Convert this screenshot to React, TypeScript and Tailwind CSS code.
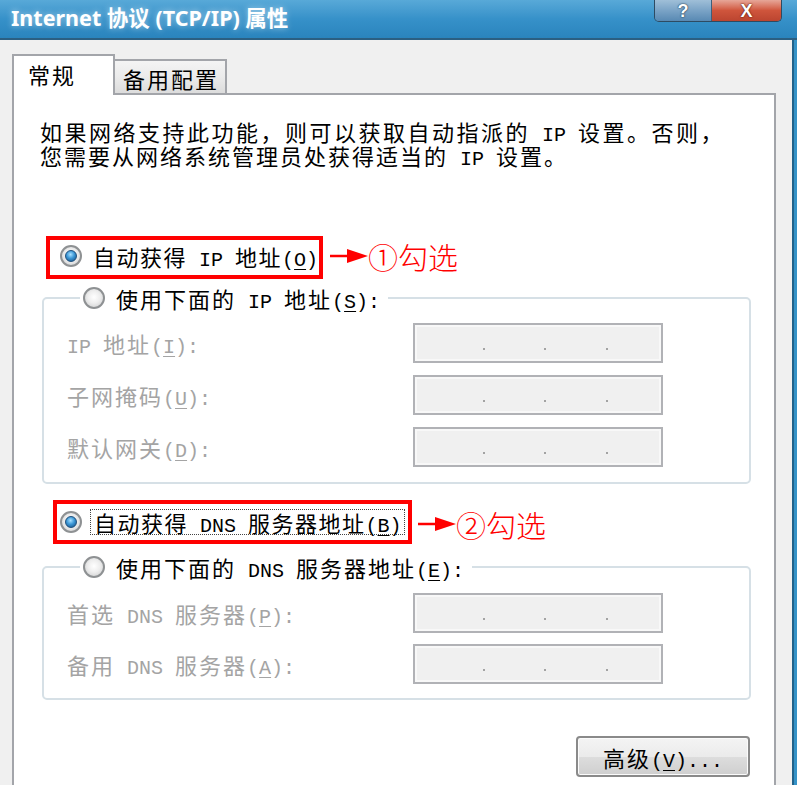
import React from "react";

function L({ children }: { children: React.ReactNode }) {
  return (
    <span className="font-['Liberation_Mono',monospace] text-[20px] leading-[0] tracking-normal whitespace-pre">
      {children}
    </span>
  );
}

function U({ children }: { children: React.ReactNode }) {
  return <span className="underline underline-offset-[3px] decoration-1">{children}</span>;
}

function Radio({ checked }: { checked?: boolean }) {
  return (
    <div className="w-[22px] h-[22px] shrink-0 rounded-full border-2 border-[#8e9193] bg-[radial-gradient(circle_at_50%_45%,#ffffff_0%,#eeeeee_45%,#c8c9ca_100%)] flex items-center justify-center">
      {checked && (
        <div className="w-[12px] h-[12px] rounded-full border border-[#1d4f7c] bg-[radial-gradient(circle_at_45%_35%,#a8e0ff_0%,#3b97d6_45%,#15497c_100%)]" />
      )}
    </div>
  );
}

function Dot({ className }: { className?: string }) {
  return <div className={"w-[2px] h-[2px] bg-[#a3a3a3] " + (className ?? "")} />;
}

function IpBox() {
  return (
    <div className="w-[250px] h-[40px] shrink-0 border-2 border-[#b1b2b6] bg-[#f0f0f0] shadow-[inset_0_0_0_2px_#f8f8f8] flex items-end pb-[11px] pl-[68px]">
      <Dot />
      <Dot className="ml-[59px]" />
      <Dot className="ml-[60px]" />
    </div>
  );
}

function FieldRow({ label }: { label: React.ReactNode }) {
  return (
    <div className="flex items-center h-[40px]">
      <div className="w-[346px] h-[24px] leading-[24px] text-[#a4a4a4] whitespace-nowrap">{label}</div>
      <IpBox />
    </div>
  );
}

function Annotation({ num }: { num: string }) {
  return (
    <div className="flex items-center h-[36px] text-[#ff0000] font-['Noto_Sans_CJK_SC',sans-serif] text-[30px] leading-[36px] tracking-normal font-light whitespace-nowrap">
      <svg width="38" height="16" viewBox="0 0 38 16" className="shrink-0">
        <line x1="0" y1="8" x2="20" y2="8" stroke="#ff0000" strokeWidth="2.5" />
        <polygon points="17,1 38,8 17,15" fill="#ff0000" />
      </svg>
      <span>{num}勾选</span>
    </div>
  );
}

export default function App() {
  return (
    <div className="w-[797px] h-[785px] overflow-hidden bg-[#f0f0f0] flex flex-col font-['Noto_Sans_CJK_SC',sans-serif] text-[22px] leading-[24px] tracking-[2px] text-black">
      {/* Title bar */}
      <div className="h-[40px] shrink-0 flex items-start justify-between bg-gradient-to-b from-[#58a9d8] via-[#3691c9] to-[#2a84bd] border-b-2 border-[#2b5f82]">
        <div className="mt-[5px] ml-[11px] font-['Noto_Sans','Noto_Sans_CJK_SC',sans-serif] font-bold text-[21.5px] leading-[26px] tracking-normal text-white [text-shadow:0_0_6px_rgba(255,255,255,0.55)] whitespace-nowrap">
          Internet 协议 (TCP/IP) 属性
        </div>
        <div className="flex mr-[15px] h-[22px] border border-t-0 border-[#2d4b63] rounded-b-[5px] overflow-hidden">
          <div className="w-[57px] h-full flex items-center justify-center bg-gradient-to-b from-[#9fbfd8] via-[#7aa3c6] to-[#5889b3] border-r border-[#3e5f7a] font-['Liberation_Sans',sans-serif] font-bold text-[18px] leading-none tracking-normal text-white [text-shadow:0_0_2px_#1d3a52,0_0_1px_#1d3a52]">
            ?
          </div>
          <div className="w-[69px] h-full flex items-center justify-center bg-gradient-to-b from-[#e6a698] via-[#cf553c] to-[#bb4530] font-['Liberation_Sans',sans-serif] font-bold text-[18px] leading-none tracking-normal text-white [text-shadow:0_0_2px_#5a1a10,0_0_1px_#5a1a10]">
            X
          </div>
        </div>
      </div>

      <div className="flex flex-1 min-h-0">
        <div className="flex-1 flex flex-col pl-[12px] pr-[16px] pt-[14px] min-h-0">
          {/* Tabs */}
          <div className="relative z-10 flex items-end h-[41px] shrink-0">
            <div className="h-[41px] w-[103px] border-2 border-b-0 border-[#a3a5aa] bg-white pl-[14px] pt-[6px] whitespace-nowrap">
              常规
            </div>
            <div className="h-[36px] w-[112px] border-2 border-l-0 border-[#a3a5aa] bg-gradient-to-b from-[#f4f4f4] via-[#ebebeb] to-[#dcdcdc] pt-[5px] pl-[8px] whitespace-nowrap">
              备用配置
            </div>
          </div>

          {/* Panel */}
          <div className="-mt-[2px] h-[720px] shrink-0 bg-white border-2 border-[#a3a5aa] pl-[26px] pr-[23px] pt-[24px] flex flex-col">
            <div className="h-[24px] leading-[24px] whitespace-nowrap tracking-[2.5px]">
              如果网络支持此功能，则可以获取自动指派的<L> IP </L>设置。否则，
            </div>
            <div className="h-[24px] leading-[24px] whitespace-nowrap">
              您需要从网络系统管理员处获得适当的<L> IP </L>设置。
            </div>

            {/* Radio 1 */}
            <div className="relative mt-[77px] ml-[20px] h-[24px] flex items-center">
              <div className="absolute left-[-14px] top-[-8px] w-[277px] h-[43px] border-4 border-[#ff0000]" />
              <Radio checked />
              <span className="ml-[11px] h-[24px] leading-[24px] tracking-[1.5px] whitespace-nowrap">
                自动获得<L> IP </L>地址<L>(<U>O</U>)</L>
              </span>
              <div className="absolute left-[270px] top-[-6px]">
                <Annotation num="①" />
              </div>
            </div>

            {/* Group 1 */}
            <fieldset className="mt-[18px] ml-[2px] w-[709px] border-2 border-[#d6e0e6] rounded-[5px] pb-[15px] pl-[23px]">
              <legend className="ml-[13px] pl-[3px] pr-[8px] h-[24px]">
                <div className="flex items-center h-[24px]">
                  <Radio />
                  <span className="ml-[11px] h-[24px] leading-[24px] whitespace-nowrap">
                    使用下面的<L> IP </L>地址<L>(<U>S</U>):</L>
                  </span>
                </div>
              </legend>
              <div className="mt-[13px] flex flex-col gap-[12px]">
                <FieldRow label={<><L>IP </L>地址<L>(<U>I</U>):</L></>} />
                <FieldRow label={<>子网掩码<L>(<U>U</U>):</L></>} />
                <FieldRow label={<>默认网关<L>(<U>D</U>):</L></>} />
              </div>
            </fieldset>

            {/* Radio 3 */}
            <div className="relative mt-[26px] ml-[20px] h-[24px] flex items-center">
              <div className="absolute left-[-7px] top-[-10px] w-[359px] h-[44px] border-4 border-[#ff0000]" />
              <Radio checked />
              <span className="ml-[8px] pl-[3px] pr-[2px] h-[26px] leading-[24px] tracking-[1.5px] border border-dotted border-[#444] whitespace-nowrap">
                自动获得<L> DNS </L>服务器地址<L>(<U>B</U>)</L>
              </span>
              <div className="absolute left-[358px] top-[-4px]">
                <Annotation num="②" />
              </div>
            </div>

            {/* Group 2 */}
            <fieldset className="mt-[21px] ml-[2px] w-[709px] border-2 border-[#d6e0e6] rounded-[5px] pb-[14px] pl-[23px]">
              <legend className="ml-[13px] pl-[3px] pr-[8px] h-[24px]">
                <div className="flex items-center h-[24px]">
                  <Radio />
                  <span className="ml-[11px] h-[24px] leading-[24px] whitespace-nowrap">
                    使用下面的<L> DNS </L>服务器地址<L>(<U>E</U>):</L>
                  </span>
                </div>
              </legend>
              <div className="mt-[14px] flex flex-col gap-[11px]">
                <FieldRow label={<>首选<L> DNS </L>服务器<L>(<U>P</U>):</L></>} />
                <FieldRow label={<>备用<L> DNS </L>服务器<L>(<U>A</U>):</L></>} />
              </div>
            </fieldset>

            {/* Advanced button */}
            <div className="mt-[36px] flex justify-end w-[709px] ml-[2px]">
              <div className="w-[174px] h-[41px] mr-[1px] rounded-[4px] border-2 border-[#8a8a8a] bg-[linear-gradient(to_bottom,#f4f4f4_0%,#ebebeb_50%,#dddddd_51%,#cfcfcf_100%)] shadow-[inset_0_0_0_1px_#fbfbfb] flex items-center justify-center whitespace-nowrap">
                <span className="h-[24px] leading-[24px]">
                  高级<L>(<U>V</U>)...</L>
                </span>
              </div>
            </div>
          </div>
        </div>
        <div className="w-[5px] shrink-0 border-l-2 border-[#22628a] bg-[#3593c8]" />
      </div>
    </div>
  );
}
